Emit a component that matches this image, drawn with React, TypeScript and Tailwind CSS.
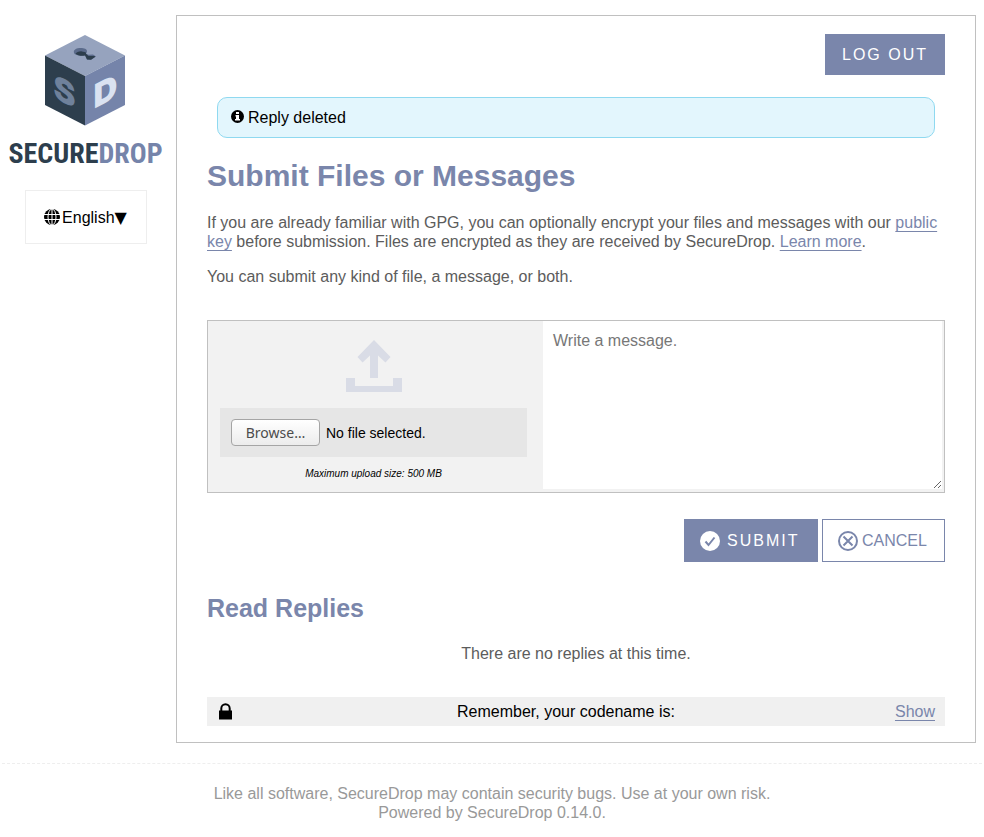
import type { ReactNode } from "react";

function Cube() {
  return (
    <svg width="82" height="92" viewBox="44 34 82 92" aria-hidden="true">
      <polygon points="85,35 125,55.5 85,76 45,55.5" fill="#96a3be" />
      <polygon points="45,55.5 85,76 85,125.500 45,105" fill="#2d3e4d" />
      <polygon points="125,55.5 85,76 85,125.500 125,105" fill="#7584aa" />
      <path
        d="M73.800 52c0-2.500 3-4 6.800-4s6.400 1.200 6.400 3.200c0 1-.4 1.800-1 2.500l2.500 1 4.500-.2 3 2-5 3.300-4-.3-1.500-4.200c-4 .8-8.500.4-10.500-1-.8-.6-1.200-1.400-1.200-2.300z"
        fill="#5b6b8b"
      />
      <path
        d="M75.500 53.800c1-1.700 3.500-2.600 6.300-2.400 2 .1 3.400.6 4.200 1.400v1l2.500 2.200 6-.1.800.8-4.300 3-4-.3-2-3.900c-3.500.8-7.500.1-9.500-1.700z"
        fill="#2d3e4d"
      />
      <g fontFamily="Inter, 'Liberation Sans', sans-serif" fontWeight="900" fontSize="33" textAnchor="middle">
        <text transform="translate(64.500 91) skewY(27)" y="12" fill="#6f819b">S</text>
        <text transform="translate(105.500 91) skewY(-27)" y="12" fill="#dae2f1">D</text>
      </g>
    </svg>
  );
}

function Globe() {
  return (
    <svg width="16" height="16" viewBox="0 0 16 16" aria-hidden="true">
      <circle cx="8" cy="8" r="8" />
      <g fill="none" stroke="#fff" strokeWidth="1">
        <path d="M0 5.500h16M0 10.500h16M8 0v16" />
        <ellipse cx="8" cy="8" rx="4" ry="8" />
      </g>
    </svg>
  );
}

function Info() {
  return (
    <svg width="13" height="13" viewBox="0 0 13 13" className="-mt-[2px]" aria-hidden="true">
      <circle cx="6.500" cy="6.500" r="6.500" />
      <path d="M5 2h3v2H5zM4.500 5H8v4h1v1.500H4V9h1V6.500h-.5z" fill="#fff" />
    </svg>
  );
}

function Upload() {
  return (
    <svg width="56" height="52" viewBox="0 0 56 52" fill="#d9dce6" aria-hidden="true">
      <path d="M28 0 44.500 17l-5 5.500L32 15.500V38h-8V15.500L16.500 22.500l-5-5.500z" />
      <path d="M0 38h9v8h38v-8h9v14H0z" />
    </svg>
  );
}

function Check() {
  return (
    <svg width="20" height="20" viewBox="0 0 20 20" aria-hidden="true">
      <circle cx="10" cy="10" r="10" fill="#fff" />
      <path d="m5.500 10.500 3 3.500 6-7.500" fill="none" stroke="#7a86ab" strokeWidth="2" />
    </svg>
  );
}

function Cross() {
  return (
    <svg width="20" height="20" viewBox="0 0 20 20" fill="none" stroke="#7a86ab" aria-hidden="true">
      <circle cx="10" cy="10" r="9" strokeWidth="2" />
      <path d="m5.500 5.500 9 9m0-9-9 9" strokeWidth="2" />
    </svg>
  );
}

function Lock() {
  return (
    <svg width="20" height="17" viewBox="-2 0 20 17" aria-hidden="true">
      <path d="M0 7.500h13V16.500H0z" />
      <path d="M2.300 9V5.500a4.200 4.200 0 0 1 8.400 0V9" fill="none" stroke="#000" strokeWidth="2" />
    </svg>
  );
}

function TextLink({ children }: { children: ReactNode }) {
  return (
    <a href="#" className="text-[#7a86ab] underline decoration-1 underline-offset-[3px] [text-decoration-skip-ink:none]">
      {children}
    </a>
  );
}

export default function App() {
  return (
    <div className="bg-white font-['Liberation_Sans',Arial,sans-serif] text-base leading-[19px] text-[#5c5c5c]">
      <div className="flex items-start gap-[5px] pt-[15px] pr-2">
        <header className="flex w-[171px] shrink-0 flex-col items-center pt-[19px]">
          <a href="#" className="flex flex-col items-center">
            <Cube />
            <span className="mt-2 font-['Liberation_Sans_Narrow','Roboto_Condensed','Liberation_Sans',sans-serif] text-[28px] leading-[40px] font-bold text-[#2d3e4d]">
              SECURE<span className="text-[#7584aa]">DROP</span>
            </span>
          </a>
          <button type="button" className="mt-4 flex h-[54px] w-[122px] items-center justify-center gap-[2px] border border-[#eee] text-black">
            <Globe />
            <span>
              English<span className="font-['DejaVu_Sans',sans-serif]">▼</span>
            </span>
          </button>
        </header>

        <main className="min-w-0 flex-1 border border-[#c0c0c0] px-[30px] pt-[18px] pb-4">
          <div className="flex justify-end">
            <button type="button" className="h-[41px] w-[120px] bg-[#7a86ab] tracking-[2px] text-white">
              LOG OUT
            </button>
          </div>

          <div role="status" className="mx-[10px] mt-[22px] flex h-[41px] items-center gap-1 rounded-[10px] border border-[#8fd9f0] bg-[#e3f6fd] px-[13px] text-black">
            <Info />
            <span>Reply deleted</span>
          </div>

          <h1 className="mt-5 text-[30px] leading-9 font-bold text-[#7a86ab]">Submit Files or Messages</h1>
          <p className="mt-[19px]">
            If you are already familiar with GPG, you can optionally encrypt your files and messages with our{" "}
            <TextLink>public key</TextLink> before submission. Files are encrypted as they are received by SecureDrop.{" "}
            <TextLink>Learn more</TextLink>.
          </p>
          <p className="mt-4">You can submit any kind of file, a message, or both.</p>

          <form onSubmit={(e) => e.preventDefault()}>
            <div className="mt-[34px] flex h-[173px] border border-[#c0c0c0] bg-[#f2f2f2]">
              <div className="flex w-[335px] shrink-0 flex-col items-center pt-[19px] pr-4 pl-3">
                <Upload />
                <label className="mt-4 flex h-[49px] w-full items-center gap-[6px] bg-[#e6e6e6] pl-[11px] text-sm text-black">
                  <input type="file" className="sr-only" />
                  <span className="flex h-[27px] w-[89px] items-center justify-center rounded-[4px] border border-[#a5a5a5] bg-linear-to-b from-white to-[#ececec] font-['Noto_Sans','Open_Sans',sans-serif] text-[#4c4c4c]">
                    Browse…
                  </span>
                  <span>No file selected.</span>
                </label>
                <p className="mt-[7px] text-[10px] text-black italic">Maximum upload size: 500 MB</p>
              </div>
              <textarea
                aria-label="Message"
                placeholder="Write a message."
                className="mr-[2px] mb-[3px] min-w-0 flex-1 resize bg-white px-[10px] py-[10px] placeholder:text-[#777]"
              />
            </div>
            <div className="mt-[26px] flex justify-end gap-1">
              <button type="submit" className="flex h-[43px] w-[134px] items-center gap-[7px] bg-[#7a86ab] pl-4 tracking-[2px] text-white">
                <Check />
                <span>SUBMIT</span>
              </button>
              <button type="button" className="flex h-[43px] w-[123px] items-center gap-1 border border-[#7a86ab] pl-[15px] text-[#7a86ab]">
                <Cross />
                <span>CANCEL</span>
              </button>
            </div>
          </form>

          <h2 className="mt-[31px] text-[25px] leading-[30px] font-bold text-[#7a86ab]">Read Replies</h2>
          <p className="mt-[21px] text-center">There are no replies at this time.</p>

          <div className="mt-[34px] flex h-[29px] items-center justify-between bg-[#f0f0f0] px-[10px] text-black">
            <Lock />
            <span>Remember, your codename is:</span>
            <TextLink>Show</TextLink>
          </div>
        </main>
      </div>

      <footer className="mx-[2px] mt-5 border-t border-dashed border-[#eee] pt-5 text-center text-[#999]">
        <p>Like all software, SecureDrop may contain security bugs. Use at your own risk.</p>
        <p>Powered by SecureDrop 0.14.0.</p>
      </footer>
    </div>
  );
}
